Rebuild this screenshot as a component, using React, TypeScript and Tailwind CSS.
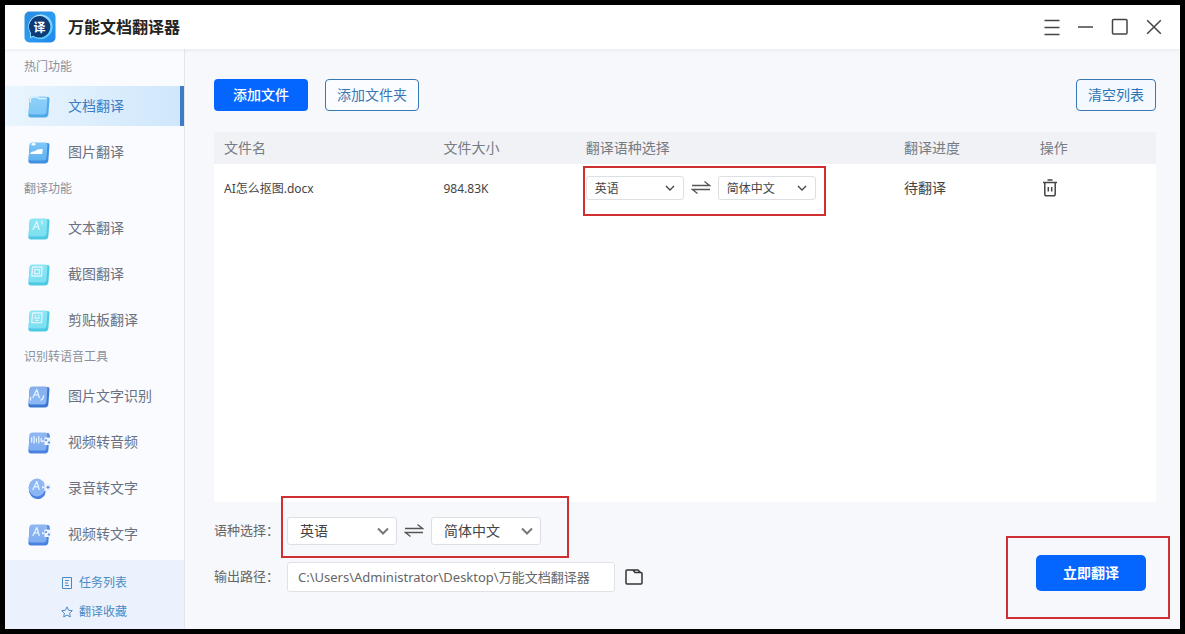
import { useId, useState } from 'react'
import type { ReactNode } from 'react'
import clsx from 'clsx'

type Glyph = 'doc' | 'image' | 'letter' | 'crop' | 'clip' | 'ocr' | 'wave' | 'voice' | 'video'

interface NavItem {
  label: string
  glyph: Glyph
}

const GROUPS: { title: string; items: NavItem[] }[] = [
  {
    title: '热门功能',
    items: [
      { label: '文档翻译', glyph: 'doc' },
      { label: '图片翻译', glyph: 'image' },
    ],
  },
  {
    title: '翻译功能',
    items: [
      { label: '文本翻译', glyph: 'letter' },
      { label: '截图翻译', glyph: 'crop' },
      { label: '剪贴板翻译', glyph: 'clip' },
    ],
  },
  {
    title: '识别转语音工具',
    items: [
      { label: '图片文字识别', glyph: 'ocr' },
      { label: '视频转音频', glyph: 'wave' },
      { label: '录音转文字', glyph: 'voice' },
      { label: '视频转文字', glyph: 'video' },
    ],
  },
]

const LANGS = ['英语', '简体中文', '日语', '韩语']

// [face top, face bottom, edge]
const TONES: Record<Glyph, [string, string, string]> = {
  doc: ['#8fd2fa', '#7cc6f6', '#4fa8e8'],
  image: ['#7cc8f8', '#62b2f0', '#3f90e0'],
  letter: ['#8be6f4', '#7cdff0', '#4cc9e4'],
  crop: ['#8be6f4', '#7cdff0', '#4cc9e4'],
  clip: ['#8be6f4', '#7cdff0', '#4cc9e4'],
  ocr: ['#86aeec', '#8db8f6', '#3a76d2'],
  wave: ['#8fb6f2', '#7fadf3', '#4a83df'],
  voice: ['#8fb6f2', '#8ab6f6', '#4a83df'],
  video: ['#8fb6f2', '#7fadf3', '#4a83df'],
}

const LETTER_A = 'M6 13.5 L9.8 5.5 L12.2 13.5 M7.4 10.8 H11.4'

function GlyphMark({ glyph }: { glyph: Glyph }) {
  switch (glyph) {
    case 'doc':
      return <path d="M3.2 8 L3.6 4.6 Q3.9 3 5.6 3 H10.5 L12 4.6 H19" />
    case 'image':
      return (
        <g stroke="none" fill="#fff">
          <path d="M2.6 14 Q4.5 11 7.5 11.3 Q10.5 8.6 15.8 9 L15.2 14 Z" />
          <ellipse cx="6.5" cy="4.2" rx="2.2" ry="1.2" />
        </g>
      )
    case 'letter':
      return <path d={`${LETTER_A} M15 5 V8`} />
    case 'crop':
      return <path d="M5.6 5 H15.2 L14.5 14 H4.8 Z M7.8 7.6 H12.6 L12.2 11.6 H7.4 Z" />
    case 'clip':
      return <path d="M5.6 5 H15.2 L14.5 14.6 H4.8 Z M8 7.8 H8.8 M11.6 7.8 H12.4 M7.6 10 H12.2 M8.6 12.4 H11.4" />
    case 'ocr':
      return <path d={`${LETTER_A} M3.6 16 V13.5 M14 16 Q16.5 15 16.5 12`} />
    case 'wave':
      return <path d="M4.6 8 V12 M7 6.5 V13 M9.4 8.5 V12 M11.8 6.5 V13 M14.2 8.5 V11.5" />
    default:
      return <path d={LETTER_A} />
  }
}

function SlabIcon({ glyph }: { glyph: Glyph }) {
  const id = useId()
  const [top, bottom, edge] = TONES[glyph]
  const round = glyph === 'voice'
  const notched = glyph === 'wave' || glyph === 'voice' || glyph === 'video'
  return (
    <svg viewBox="0 0 24 24" className="size-6 shrink-0" aria-hidden="true">
      <defs>
        <linearGradient id={id} x1="0" y1="0" x2="0" y2="1">
          <stop offset="0" stopColor={top} />
          <stop offset="1" stopColor={bottom} />
        </linearGradient>
      </defs>
      {round ? (
        <>
          <path d="M10.5 3.5 A8.8 9.8 0 1 0 17.8 19 L19 14 L17 8 Z" fill={edge} />
          <ellipse cx="10" cy="11.5" rx="8.4" ry="9" fill={`url(#${id})`} />
        </>
      ) : (
        <>
          <path d="M6 3 H20.5 Q22.6 3 22.5 5 L21.4 20 Q21.2 23.4 18 23.4 H4 Q1.3 23.4 1.4 21 L2.6 5.4 Q2.8 3 6 3 Z" fill={edge} />
          <path d="M5.4 2.4 H18.4 Q20.6 2.4 20.4 4.6 L19.4 18 Q19.2 20.4 16.9 20.4 H3.8 Q1.5 20.4 1.7 18 L2.7 4.8 Q2.9 2.4 5.4 2.4 Z" fill={`url(#${id})`} />
        </>
      )}
      {notched && (
        <>
          <path d="M17.4 7.5 H24 V15 H17.4 Z" fill="#f1f6fe" />
          <path d="M15 10 L18.5 11.2 L15 12.5 Z" fill="#e6f2ff" />
          <path d={round ? 'M19 11.2 L21 9.4 L23 11.2 L21 13 Z' : 'M18 9.2 H20 V11 H18 Z M21 5.5 H23 V7.5 H21 Z M20.8 11.5 H23 V13.5 H20.8 Z'} fill="#6795e2" />
        </>
      )}
      <g fill="none" stroke="#dff4ff" strokeWidth="1.3" strokeLinecap="round" strokeLinejoin="round">
        <GlyphMark glyph={glyph} />
      </g>
    </svg>
  )
}

function Logo() {
  return (
    <svg viewBox="0 0 32 32" className="size-8" aria-hidden="true">
      <defs>
        <linearGradient id="logo-bg" x1="0" y1="0" x2="1" y2="1">
          <stop offset="0" stopColor="#2a8ade" />
          <stop offset="0.5" stopColor="#2c9cf0" />
          <stop offset="1" stopColor="#1f86ee" />
        </linearGradient>
        <linearGradient id="logo-ring" x1="0" y1="0" x2="1" y2="1">
          <stop offset="0" stopColor="#cfeeff" />
          <stop offset="1" stopColor="#3fc4fb" />
        </linearGradient>
      </defs>
      <rect x="0.5" y="0.5" width="31" height="31" rx="5" fill="url(#logo-bg)" />
      <path d="M16.5 3.5 A12.3 12.3 0 1 1 9.5 26 L6 27.2 V22 A12.3 12.3 0 0 1 16.5 3.5 Z" fill="url(#logo-ring)" />
      <path d="M15.5 5 A10.8 10.8 0 1 1 9.5 24.8 L7 25.6 V22 A10.8 10.8 0 0 1 15.5 5 Z" fill="#0d3b76" />
      <text x="15.5" y="20.5" textAnchor="middle" fontSize="12" fontWeight="700" fill="#fff">译</text>
    </svg>
  )
}

function SwapIcon() {
  return (
    <svg viewBox="0 0 20 16" className="h-4 w-5 shrink-0" fill="none" stroke="#555" strokeWidth="1.3" aria-hidden="true">
      <path d="M1 5.5 H18.5 L13.5 1.5" />
      <path d="M19 9.5 H1.5 L6.5 13.5" />
    </svg>
  )
}

function LangSelect({ label, value, onChange, small }: {
  label: string
  value: string
  onChange: (v: string) => void
  small?: boolean
}) {
  return (
    <div className={clsx('relative', small ? 'w-[98px]' : 'w-[110px]')}>
      <select
        aria-label={label}
        value={value}
        onChange={(e) => onChange(e.target.value)}
        className={clsx(
          'block w-full appearance-none rounded-[3px] border border-[#dcdfe4] bg-white text-[#444]',
          small ? 'h-6 pt-0.5 pl-2 text-xs' : 'h-7 pl-3 text-sm',
        )}
      >
        {LANGS.map((l) => (
          <option key={l}>{l}</option>
        ))}
      </select>
      <svg
        viewBox="0 0 12 12"
        className="pointer-events-none absolute top-1/2 right-2 size-3 -translate-y-1/2"
        fill="none"
        stroke={small ? '#444' : '#777'}
        strokeWidth={small ? 1.3 : 2}
        aria-hidden="true"
      >
        <path d={small ? 'M2 4 L6 8 L10 4' : 'M1 3.5 L6 8.5 L11 3.5'} />
      </svg>
    </div>
  )
}

function LangPair({ small }: { small?: boolean }) {
  const [from, setFrom] = useState('英语')
  const [to, setTo] = useState('简体中文')
  return (
    <div className="flex items-center gap-[7px]">
      <LangSelect label="源语言" value={from} onChange={setFrom} small={small} />
      <button
        type="button"
        aria-label="交换语种"
        onClick={() => {
          setFrom(to)
          setTo(from)
        }}
      >
        <SwapIcon />
      </button>
      <LangSelect label="目标语言" value={to} onChange={setTo} small={small} />
    </div>
  )
}

function Highlight({ className }: { className: string }) {
  return <div className={clsx('pointer-events-none absolute border-2 border-[#cf2f30]', className)} />
}

function WindowButton({ label, children }: { label: string; children: ReactNode }) {
  return (
    <button type="button" aria-label={label}>
      <svg viewBox="0 0 18 18" className="size-[18px]" fill="none" stroke="#444" strokeWidth="1.5" aria-hidden="true">
        {children}
      </svg>
    </button>
  )
}

function TitleBar() {
  return (
    <header className="relative flex h-11 items-center bg-white pr-[17px] pl-[19px] shadow-[0_1px_4px_rgba(30,50,80,0.08)]">
      <Logo />
      <h1 className="ml-3 text-base font-bold text-[#222]">万能文档翻译器</h1>
      <div className="ml-auto flex items-center gap-4">
        <WindowButton label="菜单">
          <path d="M1.5 2.5 H16.5 M1.5 9.5 H16.5 M1.5 16.5 H16.5" />
        </WindowButton>
        <WindowButton label="最小化">
          <path d="M1 9 H16" />
        </WindowButton>
        <WindowButton label="最大化">
          <rect x="1.5" y="1.5" width="14.5" height="14.5" rx="1" />
        </WindowButton>
        <WindowButton label="关闭">
          <path d="M2.2 2.2 L15.8 15.8 M15.8 2.2 L2.2 15.8" />
        </WindowButton>
      </div>
    </header>
  )
}

function Sidebar() {
  const [active, setActive] = useState('文档翻译')
  return (
    <aside className="flex w-[180px] shrink-0 flex-col border-r border-[#e3e7ed] bg-[#fafbfe]">
      <nav className="pt-px">
        {GROUPS.map((g) => (
          <section key={g.title}>
            <h2 className="flex h-9 items-center pb-0.5 pl-[19px] text-xs text-[#8a909c]">{g.title}</h2>
            <ul className="flex flex-col gap-1.5">
              {g.items.map((item) => (
                <li key={item.label}>
                  <button
                    type="button"
                    onClick={() => setActive(item.label)}
                    className={clsx(
                      'flex h-10 w-full items-center gap-[17px] border-r-4 pl-[22px] text-sm',
                      item.label === active
                        ? 'border-[#3f7cc8] bg-linear-to-r from-[#eaf5fe] to-[#cfe7fc] text-[#3b7cc4]'
                        : 'border-transparent text-[#6b7180]',
                    )}
                  >
                    <SlabIcon glyph={item.glyph} />
                    {item.label}
                  </button>
                </li>
              ))}
            </ul>
          </section>
        ))}
      </nav>
      <div className="mt-auto flex flex-col gap-[9px] bg-[#ecf2fd] pt-[13px] pb-[7px] pl-14 text-xs text-[#4a8ac4]">
        <a href="#tasks" className="flex h-5 items-center gap-1.5">
          <svg viewBox="0 0 12 12" className="size-3" fill="none" stroke="currentColor" aria-hidden="true">
            <path d="M1.5 0.5 H10.5 V11.5 H1.5 Z M4 3.5 H8 M4 6 H7 M4 8.5 H8" />
          </svg>
          任务列表
        </a>
        <a href="#favorites" className="flex h-5 items-center gap-1.5">
          <svg viewBox="0 0 12 12" className="size-3" fill="none" stroke="currentColor" strokeLinejoin="round" aria-hidden="true">
            <path d="M6 0.9 L7.6 4.2 L11.3 4.7 L8.6 7.2 L9.3 10.9 L6 9.1 L2.7 10.9 L3.4 7.2 L0.7 4.7 L4.4 4.2 Z" />
          </svg>
          翻译收藏
        </a>
      </div>
    </aside>
  )
}

function FileTable() {
  return (
    <div className="mt-[21px] flex-1 bg-white">
      <table className="w-full table-fixed text-left text-sm">
        <thead>
          <tr className="h-8 bg-[#f1f2f5] text-[#777b84]">
            <th className="w-[23.3%] pl-2.5 font-normal">文件名</th>
            <th className="w-[15.1%] pl-2.5 font-normal">文件大小</th>
            <th className="w-[33.8%] pl-2.5 font-normal">翻译语种选择</th>
            <th className="w-[14.4%] pl-2.5 font-normal">翻译进度</th>
            <th className="pl-2.5 font-normal">操作</th>
          </tr>
        </thead>
        <tbody>
          <tr className="h-12 text-[#444]">
            <td className="pt-0.5 pl-2.5 text-xs">AI怎么抠图.docx</td>
            <td className="pt-0.5 pl-2.5 text-xs">984.83K</td>
            <td className="pl-2.5">
              <div className="relative w-fit">
                <LangPair small />
                <Highlight className="-top-2.5 -right-2.5 -bottom-4 -left-[3px]" />
              </div>
            </td>
            <td className="pl-2.5">待翻译</td>
            <td className="pl-3">
              <button type="button" aria-label="删除" className="block">
                <svg viewBox="0 0 16 18" className="h-[18px] w-4" fill="none" stroke="#444" strokeWidth="1.5" aria-hidden="true">
                  <path d="M1 3.5 H15 M5.5 1 H10.5 M2.8 3.5 V15 Q2.8 16.8 4.5 16.8 H11.5 Q13.2 16.8 13.2 15 V3.5 M6.3 8 V12.5 M9.7 8 V12.5" />
                </svg>
              </button>
            </td>
          </tr>
        </tbody>
      </table>
    </div>
  )
}

function Footer() {
  const [path, setPath] = useState('C:\\Users\\Administrator\\Desktop\\万能文档翻译器')
  return (
    <div className="mt-[15px] flex items-end justify-between">
      <div className="flex flex-col gap-[17px] text-[13px] text-[#666]">
        <div className="flex items-center">
          <span className="w-[73px]">语种选择：</span>
          <div className="relative">
            <LangPair />
            <Highlight className="-top-[21px] -right-7 -bottom-[13px] -left-1.5" />
          </div>
        </div>
        <div className="flex items-center">
          <label htmlFor="output" className="w-[73px]">输出路径：</label>
          <input
            id="output"
            value={path}
            onChange={(e) => setPath(e.target.value)}
            className="h-[30px] w-[328px] rounded-[3px] border border-[#dfe2e7] bg-white px-2.5 pb-0.5 text-[#666]"
          />
          <button type="button" aria-label="选择文件夹" className="ml-2.5">
            <svg viewBox="0 0 18 16" className="h-4 w-[18px]" fill="none" stroke="#333" strokeWidth="1.5" strokeLinejoin="round" aria-hidden="true">
              <path d="M1 2 Q1 1 2 1 H8 L10 3.5 H16 Q17 3.5 17 4.5 V14 Q17 15 16 15 H2 Q1 15 1 14 Z M8 1 H13 L15.5 3.5" />
            </svg>
          </button>
        </div>
      </div>
      <div className="relative mr-2.5 mb-px">
        <button type="button" className="block h-9 w-[110px] rounded-[5px] bg-[#0566ff] text-sm font-bold text-white">
          立即翻译
        </button>
        <Highlight className="-top-[19px] -right-6 -bottom-7 -left-[30px]" />
      </div>
    </div>
  )
}

export default function App() {
  return (
    <div className="flex min-h-screen flex-col border-[5px] border-black bg-[#f6f8fb] font-['Noto_Sans','Noto_Sans_CJK_SC',sans-serif]">
      <TitleBar />
      <div className="flex flex-1">
        <Sidebar />
        <main className="flex min-w-0 flex-1 flex-col pt-[30px] pr-6 pb-[37px] pl-[29px]">
          <div className="flex items-center text-sm">
            <button type="button" className="h-8 w-[94px] rounded-sm bg-[#0566ff] font-medium text-white">
              添加文件
            </button>
            <button type="button" className="ml-[17px] h-8 w-[94px] rounded-sm border border-[#3a78b5] bg-[#fafcff] text-[#3a78b5]">
              添加文件夹
            </button>
            <button type="button" className="ml-auto h-8 w-20 rounded-sm border border-[#3a78b5] bg-[#f3f9ff] text-[#2b74b5]">
              清空列表
            </button>
          </div>
          <FileTable />
          <Footer />
        </main>
      </div>
    </div>
  )
}
